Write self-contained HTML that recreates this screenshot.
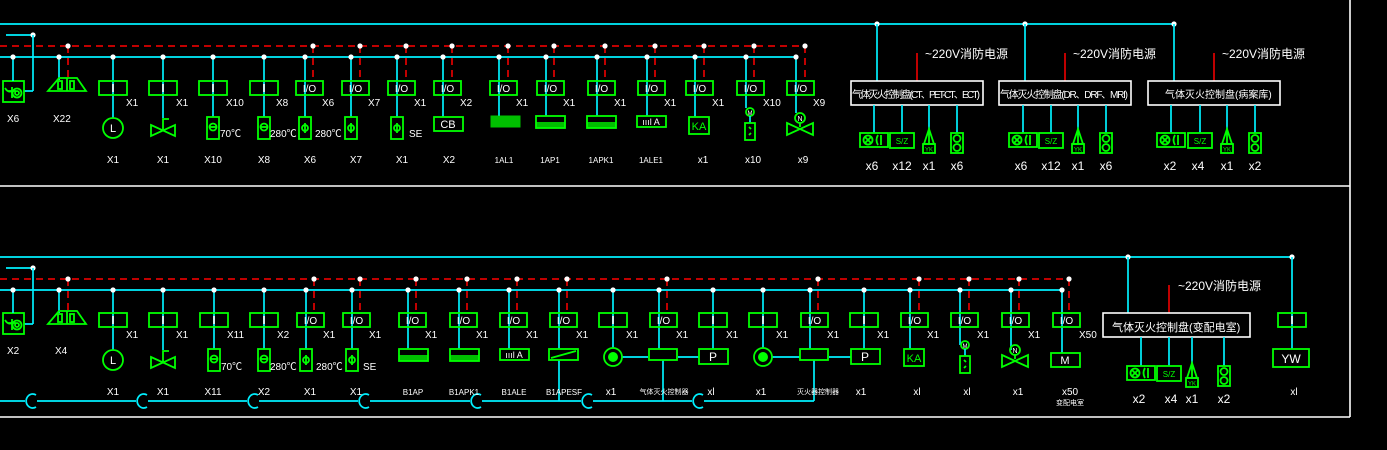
<!DOCTYPE html>
<html><head><meta charset="utf-8"><style>
html,body{margin:0;padding:0;background:#000;width:1387px;height:450px;overflow:hidden}
svg{display:block}
text{font-family:"Liberation Sans","Noto Sans CJK SC",sans-serif;fill:#fff;font-size:10px}
.g{fill:none;stroke:#00ff00;stroke-width:1.8}
.c{stroke:#00f0ff;stroke-width:1.7;fill:none}
.r{stroke:#f00;stroke-width:1.5;fill:none}
.rd{stroke:#f00;stroke-width:1.5;stroke-dasharray:7 5;fill:none}
.w{stroke:#fff;stroke-width:1.6;fill:none}
.bt{font-size:10px;text-anchor:middle}
.ct{text-anchor:middle}
</style></head><body>
<svg width="1387" height="450" viewBox="0 0 1387 450" xmlns="http://www.w3.org/2000/svg">
<defs>
<g id="dot"><circle r="2.6" fill="#fff"/></g>
<g id="bi"><rect x="-14" y="0" width="28" height="14" class="g"/><rect x="-0.8" y="3" width="1.6" height="8" fill="#fff"/></g>
<g id="bio"><rect x="-9" y="0" width="27" height="14" class="g"/><text x="4.5" y="11" class="ct" style="font-size:10px">I/O</text></g>
<g id="lamp"><circle cx="0" cy="10" r="10" class="g"/><text x="0" y="14" class="ct" style="font-size:11px">L</text></g>
<g id="valve"><path d="M-12 3 L12 14 L12 3 L-12 14 Z M0 9 V-3 H6" class="g"/></g>
<g id="th"><rect x="-6" y="0" width="12" height="22" class="g"/><circle cx="0" cy="10" r="3.5" class="g"/><line x1="-4" y1="10" x2="4" y2="10" class="g"/></g>
<g id="ph"><rect x="-6" y="0" width="12" height="22" class="g"/><circle cx="0" cy="11" r="3" class="g"/><line x1="0" y1="6" x2="0" y2="16" class="g"/></g>
<g id="hat1"><rect x="-14" y="0" width="29" height="11" fill="#00ff00" opacity=".75" stroke="#00ff00"/></g>
<g id="hat2"><rect x="-14" y="0" width="29" height="12" class="g"/><rect x="-14" y="6" width="29" height="6" fill="#00ff00" opacity=".75"/></g>
<g id="ale"><rect x="-14" y="0" width="29" height="11" class="g"/><text x="0" y="9" class="ct" style="font-size:9px">ıııl A</text></g>
<g id="ka"><rect x="-10" y="0" width="20" height="17" class="g"/><text x="0" y="13" class="ct" style="font-size:11px;fill:#00ff00">KA</text></g>
<g id="mot"><circle cx="0" cy="0" r="4" class="g"/><text x="0" y="3" class="ct" style="font-size:6px">M</text><line x1="0" y1="4" x2="0" y2="11" class="c"/><rect x="-5" y="11" width="10" height="17" class="g"/><path d="M-1 15 L1 17 M-1 23 L1 21" class="g"/></g>
<g id="vn"><circle cx="0" cy="0" r="5" class="g"/><text x="0" y="3" class="ct" style="font-size:7px">N</text><path d="M0 5 V9 M-13 5 L13 17 L13 5 L-13 17 Z" class="g"/></g>
<g id="hs"><rect x="-14" y="0" width="28" height="14" class="g"/><circle cx="-6" cy="7" r="4.5" class="g"/><path d="M-9 4 L-3 10 M-3 4 L-9 10 M4 2 Q1 7 4 12 M7 2 V12" class="g"/></g>
<g id="sz"><rect x="-12" y="0" width="24" height="15" class="g"/><text x="0" y="11" class="ct" style="font-size:8px;fill:#00ff00">S/Z</text></g>
<g id="yk"><path d="M0 -5 L-5 10 L5 10 Z M0 -5 V10" class="g"/><rect x="-6" y="10" width="12" height="9" class="g"/><text x="0" y="17.5" class="ct" style="font-size:6px;fill:#00ff00">YK</text></g>
<g id="oo"><rect x="-6" y="0" width="12" height="20" class="g"/><circle cx="0" cy="5.5" r="3.5" class="g"/><circle cx="0" cy="14.5" r="3.5" class="g"/></g>
<g id="icon1"><rect x="0" y="0" width="21" height="21" class="g"/><path d="M2 7 Q5 12 9 10 M9 6 V17 M5 10 H13" class="g"/><circle cx="14" cy="12" r="4.5" class="g"/><circle cx="14" cy="12" r="2" class="g"/></g>
<g id="tri"><path d="M-8 11 L3 -2 L21 -2 L30 11 Z M11 -2 V11" class="g"/><rect x="2" y="1" width="4" height="8" class="g"/><rect x="14" y="1" width="4" height="8" class="g"/></g>
<g id="cc"><path d="M4 -6 A6.5 7 0 1 0 4 6" class="c"/></g>
</defs>

<line x1="1350" y1="0" x2="1350" y2="417" class="w"/>
<line x1="0" y1="186" x2="1350" y2="186" class="w"/>
<line x1="0" y1="417" x2="1350" y2="417" class="w"/>

<line x1="0" y1="24" x2="1175" y2="24" class="c"/>
<line x1="6" y1="35" x2="33" y2="35" class="c"/><use href="#dot" x="33" y="35"/>
<line x1="33" y1="35" x2="33" y2="91" class="c"/><line x1="24" y1="91" x2="33" y2="91" class="c"/>
<line x1="0" y1="46" x2="806" y2="46" class="rd"/>
<line x1="0" y1="57" x2="796" y2="57" class="c"/>
<g>
<use href="#icon1" x="3" y="81"/><line x1="13" y1="57" x2="13" y2="81" class="c"/><use href="#dot" x="13" y="57"/>
<line x1="59" y1="57" x2="59" y2="80" class="c"/><use href="#dot" x="59" y="57"/><line x1="68" y1="46" x2="68" y2="78" class="rd"/><use href="#dot" x="68" y="46"/>
<use href="#tri" x="56" y="80"/>
<text x="7" y="122">X6</text><text x="53" y="122">X22</text>
</g>
<g class="c">
<line x1="113" y1="57" x2="113" y2="118"/><line x1="163" y1="57" x2="163" y2="118"/><line x1="213" y1="57" x2="213" y2="117"/><line x1="264" y1="57" x2="264" y2="117"/>
<line x1="305" y1="57" x2="305" y2="117"/><line x1="351" y1="57" x2="351" y2="117"/><line x1="397" y1="57" x2="397" y2="117"/><line x1="443" y1="57" x2="443" y2="117"/>
<line x1="499" y1="57" x2="499" y2="116"/><line x1="546" y1="57" x2="546" y2="116"/><line x1="597" y1="57" x2="597" y2="116"/><line x1="647" y1="57" x2="647" y2="116"/>
<line x1="695" y1="57" x2="695" y2="117"/><line x1="746" y1="57" x2="746" y2="108"/><line x1="796" y1="57" x2="796" y2="113"/>
</g>
<g class="rd">
<line x1="313" y1="46" x2="313" y2="81"/><line x1="360" y1="46" x2="360" y2="81"/><line x1="406" y1="46" x2="406" y2="81"/><line x1="452" y1="46" x2="452" y2="81"/>
<line x1="508" y1="46" x2="508" y2="81"/><line x1="554" y1="46" x2="554" y2="81"/><line x1="605" y1="46" x2="605" y2="81"/><line x1="655" y1="46" x2="655" y2="81"/>
<line x1="704" y1="46" x2="704" y2="81"/><line x1="754" y1="46" x2="754" y2="81"/><line x1="805" y1="46" x2="805" y2="81"/>
</g>
<g>
<use href="#dot" x="113" y="57"/><use href="#dot" x="163" y="57"/><use href="#dot" x="213" y="57"/><use href="#dot" x="264" y="57"/><use href="#dot" x="305" y="57"/><use href="#dot" x="351" y="57"/><use href="#dot" x="397" y="57"/><use href="#dot" x="443" y="57"/><use href="#dot" x="499" y="57"/><use href="#dot" x="546" y="57"/><use href="#dot" x="597" y="57"/><use href="#dot" x="647" y="57"/><use href="#dot" x="695" y="57"/><use href="#dot" x="746" y="57"/><use href="#dot" x="796" y="57"/>
<use href="#dot" x="313" y="46"/><use href="#dot" x="360" y="46"/><use href="#dot" x="406" y="46"/><use href="#dot" x="452" y="46"/><use href="#dot" x="508" y="46"/><use href="#dot" x="554" y="46"/><use href="#dot" x="605" y="46"/><use href="#dot" x="655" y="46"/><use href="#dot" x="704" y="46"/><use href="#dot" x="754" y="46"/><use href="#dot" x="805" y="46"/>
</g>
<g>
<use href="#bi" x="113" y="81"/><use href="#bi" x="163" y="81"/><use href="#bi" x="213" y="81"/><use href="#bi" x="264" y="81"/>
<use href="#bio" x="305" y="81"/><use href="#bio" x="351" y="81"/><use href="#bio" x="397" y="81"/><use href="#bio" x="443" y="81"/>
<use href="#bio" x="499" y="81"/><use href="#bio" x="546" y="81"/><use href="#bio" x="597" y="81"/><use href="#bio" x="647" y="81"/>
<use href="#bio" x="695" y="81"/><use href="#bio" x="746" y="81"/><use href="#bio" x="796" y="81"/>
<use href="#lamp" x="113" y="118"/><use href="#valve" x="163" y="122"/>
<use href="#th" x="213" y="117"/><text x="220" y="137">70℃</text>
<use href="#th" x="264" y="117"/><text x="270" y="137">280℃</text>
<use href="#ph" x="305" y="117"/><text x="315" y="137">280℃</text>
<use href="#ph" x="351" y="117"/>
<use href="#ph" x="397" y="117"/><text x="409" y="137">SE</text>
<rect x="434" y="117" width="29" height="14" class="g"/><text x="448" y="128" class="ct" style="font-size:11px">CB</text>
<use href="#hat1" x="505" y="116"/><use href="#hat2" x="550" y="116"/><use href="#hat2" x="601" y="116"/><use href="#ale" x="651" y="116"/>
<use href="#ka" x="699" y="117"/><use href="#mot" x="750" y="112"/><use href="#vn" x="800" y="118"/>
</g>
<g>
<text x="126" y="106">X1</text><text x="176" y="106">X1</text><text x="226" y="106">X10</text><text x="276" y="106">X8</text><text x="322" y="106">X6</text><text x="368" y="106">X7</text><text x="414" y="106">X1</text><text x="460" y="106">X2</text>
<text x="516" y="106">X1</text><text x="563" y="106">X1</text><text x="614" y="106">X1</text><text x="664" y="106">X1</text><text x="712" y="106">X1</text><text x="763" y="106">X10</text><text x="813" y="106">X9</text>
</g>
<g>
<text x="113" y="163" class="bt">X1</text><text x="163" y="163" class="bt">X1</text><text x="213" y="163" class="bt">X10</text><text x="264" y="163" class="bt">X8</text><text x="310" y="163" class="bt">X6</text><text x="356" y="163" class="bt">X7</text><text x="402" y="163" class="bt">X1</text><text x="449" y="163" class="bt">X2</text>
<text x="504" y="163" class="bt" style="font-size:8px">1AL1</text><text x="550" y="163" class="bt" style="font-size:8px">1AP1</text><text x="601" y="163" class="bt" style="font-size:8px">1APK1</text><text x="651" y="163" class="bt" style="font-size:8px">1ALE1</text>
<text x="703" y="163" class="bt">x1</text><text x="753" y="163" class="bt">x10</text><text x="803" y="163" class="bt">x9</text>
</g>

<g>
<use href="#dot" x="877" y="24"/><use href="#dot" x="1025" y="24"/><use href="#dot" x="1174" y="24"/>
<line x1="877" y1="24" x2="877" y2="81" class="c"/><line x1="1025" y1="24" x2="1025" y2="81" class="c"/><line x1="1174" y1="24" x2="1174" y2="81" class="c"/>
<line x1="917" y1="53" x2="917" y2="81" class="r"/><line x1="1065" y1="53" x2="1065" y2="81" class="r"/><line x1="1214" y1="53" x2="1214" y2="81" class="r"/>
<text x="925" y="58" style="font-size:12px">~220V消防电源</text><text x="1073" y="58" style="font-size:12px">~220V消防电源</text><text x="1222" y="58" style="font-size:12px">~220V消防电源</text>
<rect x="851" y="81" width="132" height="24" class="w"/><rect x="999" y="81" width="132" height="24" class="w"/><rect x="1148" y="81" width="132" height="24" class="w"/>
<text x="852" y="98" style="font-size:10px" textLength="128">气体灭火控制盘(CT、PET-CT、ECT)</text>
<text x="1000" y="98" style="font-size:10px" textLength="128">气体灭火控制盘(DR、DRF、MRI)</text>
<text x="1165" y="98" style="font-size:10px">气体灭火控制盘(病案库)</text>
<g class="c">
<line x1="874" y1="105" x2="874" y2="133"/><line x1="902" y1="105" x2="902" y2="133"/><line x1="929" y1="105" x2="929" y2="131"/><line x1="957" y1="105" x2="957" y2="133"/>
<line x1="1023" y1="105" x2="1023" y2="133"/><line x1="1051" y1="105" x2="1051" y2="133"/><line x1="1078" y1="105" x2="1078" y2="131"/><line x1="1106" y1="105" x2="1106" y2="133"/>
<line x1="1171" y1="105" x2="1171" y2="133"/><line x1="1200" y1="105" x2="1200" y2="133"/><line x1="1227" y1="105" x2="1227" y2="131"/><line x1="1255" y1="105" x2="1255" y2="133"/>
</g>
<use href="#hs" x="874" y="133"/><use href="#sz" x="902" y="133"/><use href="#yk" x="929" y="134"/><use href="#oo" x="957" y="133"/>
<use href="#hs" x="1023" y="133"/><use href="#sz" x="1051" y="133"/><use href="#yk" x="1078" y="134"/><use href="#oo" x="1106" y="133"/>
<use href="#hs" x="1171" y="133"/><use href="#sz" x="1200" y="133"/><use href="#yk" x="1227" y="134"/><use href="#oo" x="1255" y="133"/>
<text x="872" y="170" class="ct" style="font-size:12px">x6</text><text x="902" y="170" class="ct" style="font-size:12px">x12</text><text x="929" y="170" class="ct" style="font-size:12px">x1</text><text x="957" y="170" class="ct" style="font-size:12px">x6</text>
<text x="1021" y="170" class="ct" style="font-size:12px">x6</text><text x="1051" y="170" class="ct" style="font-size:12px">x12</text><text x="1078" y="170" class="ct" style="font-size:12px">x1</text><text x="1106" y="170" class="ct" style="font-size:12px">x6</text>
<text x="1170" y="170" class="ct" style="font-size:12px">x2</text><text x="1198" y="170" class="ct" style="font-size:12px">x4</text><text x="1227" y="170" class="ct" style="font-size:12px">x1</text><text x="1255" y="170" class="ct" style="font-size:12px">x2</text>
</g>

<line x1="0" y1="257" x2="1292" y2="257" class="c"/>
<line x1="6" y1="268" x2="33" y2="268" class="c"/><use href="#dot" x="33" y="268"/>
<line x1="33" y1="268" x2="33" y2="324" class="c"/><line x1="24" y1="324" x2="33" y2="324" class="c"/>
<line x1="0" y1="279" x2="1069" y2="279" class="rd"/>
<line x1="0" y1="290" x2="1062" y2="290" class="c"/>
<use href="#icon1" x="3" y="313"/><line x1="13" y1="290" x2="13" y2="313" class="c"/><use href="#dot" x="13" y="290"/>
<line x1="59" y1="290" x2="59" y2="313" class="c"/><use href="#dot" x="59" y="290"/><line x1="68" y1="279" x2="68" y2="311" class="rd"/><use href="#dot" x="68" y="279"/>
<use href="#tri" x="56" y="313"/>
<text x="7" y="354">X2</text><text x="55" y="354">X4</text>
<g class="c">
<line x1="113" y1="290" x2="113" y2="350"/><line x1="163" y1="290" x2="163" y2="350"/><line x1="214" y1="290" x2="214" y2="349"/><line x1="264" y1="290" x2="264" y2="349"/>
<line x1="306" y1="290" x2="306" y2="349"/><line x1="352" y1="290" x2="352" y2="349"/><line x1="408" y1="290" x2="408" y2="349"/><line x1="459" y1="290" x2="459" y2="349"/>
<line x1="509" y1="290" x2="509" y2="349"/><line x1="559" y1="290" x2="559" y2="349"/><line x1="559" y1="360" x2="559" y2="401"/>
<line x1="613" y1="290" x2="613" y2="348"/><line x1="659" y1="290" x2="659" y2="349"/><line x1="713" y1="290" x2="713" y2="349"/>
<line x1="763" y1="290" x2="763" y2="348"/><line x1="810" y1="290" x2="810" y2="349"/><line x1="864" y1="290" x2="864" y2="349"/>
<line x1="910" y1="290" x2="910" y2="349"/><line x1="960" y1="290" x2="960" y2="345"/><line x1="1011" y1="290" x2="1011" y2="350"/><line x1="1062" y1="290" x2="1062" y2="353"/>
<line x1="622" y1="357" x2="648" y2="357"/><line x1="678" y1="357" x2="699" y2="357"/><line x1="663" y1="360" x2="663" y2="401"/>
<line x1="772" y1="357" x2="800" y2="357"/><line x1="829" y1="357" x2="851" y2="357"/><line x1="814" y1="360" x2="814" y2="401"/>
<line x1="0" y1="401" x2="25" y2="401"/><line x1="37" y1="401" x2="136" y2="401"/><line x1="148" y1="401" x2="247" y2="401"/><line x1="259" y1="401" x2="358" y2="401"/><line x1="370" y1="401" x2="470" y2="401"/><line x1="482" y1="401" x2="581" y2="401"/><line x1="593" y1="401" x2="692" y2="401"/><line x1="704" y1="401" x2="814" y2="401"/>
</g>
<use href="#cc" x="32" y="401"/><use href="#cc" x="143" y="401"/><use href="#cc" x="254" y="401"/><use href="#cc" x="365" y="401"/><use href="#cc" x="477" y="401"/><use href="#cc" x="588" y="401"/><use href="#cc" x="699" y="401"/>
<g class="rd">
<line x1="314" y1="279" x2="314" y2="313"/><line x1="360" y1="279" x2="360" y2="313"/><line x1="416" y1="279" x2="416" y2="313"/><line x1="467" y1="279" x2="467" y2="313"/>
<line x1="517" y1="279" x2="517" y2="313"/><line x1="567" y1="279" x2="567" y2="313"/><line x1="667" y1="279" x2="667" y2="313"/><line x1="818" y1="279" x2="818" y2="313"/>
<line x1="919" y1="279" x2="919" y2="313"/><line x1="969" y1="279" x2="969" y2="313"/><line x1="1019" y1="279" x2="1019" y2="313"/><line x1="1069" y1="279" x2="1069" y2="313"/>
</g>
<g>
<use href="#dot" x="113" y="290"/><use href="#dot" x="163" y="290"/><use href="#dot" x="214" y="290"/><use href="#dot" x="264" y="290"/><use href="#dot" x="306" y="290"/><use href="#dot" x="352" y="290"/><use href="#dot" x="408" y="290"/><use href="#dot" x="459" y="290"/><use href="#dot" x="509" y="290"/><use href="#dot" x="559" y="290"/><use href="#dot" x="613" y="290"/><use href="#dot" x="659" y="290"/><use href="#dot" x="713" y="290"/><use href="#dot" x="763" y="290"/><use href="#dot" x="810" y="290"/><use href="#dot" x="864" y="290"/><use href="#dot" x="910" y="290"/><use href="#dot" x="960" y="290"/><use href="#dot" x="1011" y="290"/><use href="#dot" x="1062" y="290"/>
<use href="#dot" x="314" y="279"/><use href="#dot" x="360" y="279"/><use href="#dot" x="416" y="279"/><use href="#dot" x="467" y="279"/><use href="#dot" x="517" y="279"/><use href="#dot" x="567" y="279"/><use href="#dot" x="667" y="279"/><use href="#dot" x="818" y="279"/><use href="#dot" x="919" y="279"/><use href="#dot" x="969" y="279"/><use href="#dot" x="1019" y="279"/><use href="#dot" x="1069" y="279"/>
</g>
<g>
<use href="#bi" x="113" y="313"/><use href="#bi" x="163" y="313"/><use href="#bi" x="214" y="313"/><use href="#bi" x="264" y="313"/>
<use href="#bio" x="306" y="313"/><use href="#bio" x="352" y="313"/><use href="#bio" x="408" y="313"/><use href="#bio" x="459" y="313"/><use href="#bio" x="509" y="313"/><use href="#bio" x="559" y="313"/>
<use href="#bi" x="613" y="313"/><use href="#bio" x="659" y="313"/><use href="#bi" x="713" y="313"/><use href="#bi" x="763" y="313"/><use href="#bio" x="810" y="313"/><use href="#bi" x="864" y="313"/>
<use href="#bio" x="910" y="313"/><use href="#bio" x="960" y="313"/><use href="#bio" x="1011" y="313"/><use href="#bio" x="1062" y="313"/>
<use href="#lamp" x="113" y="350"/><use href="#valve" x="163" y="354"/>
<use href="#th" x="214" y="349"/><text x="221" y="370">70℃</text>
<use href="#th" x="264" y="349"/><text x="270" y="370">280℃</text>
<use href="#ph" x="306" y="349"/><text x="316" y="370">280℃</text>
<use href="#ph" x="352" y="349"/><text x="363" y="370">SE</text>
<use href="#hat2" x="413" y="349"/><use href="#hat2" x="464" y="349"/><use href="#ale" x="514" y="349"/>
<rect x="549" y="349" width="29" height="11" class="g"/><line x1="551" y1="358" x2="576" y2="351" class="g"/>
<circle cx="613" cy="357" r="9" class="g"/><circle cx="613" cy="357" r="5" fill="#00ff00"/>
<rect x="649" y="349" width="28" height="11" class="g"/>
<rect x="699" y="349" width="29" height="15" class="g"/><text x="713" y="361" class="ct" style="font-size:12px">P</text>
<circle cx="763" cy="357" r="9" class="g"/><circle cx="763" cy="357" r="5" fill="#00ff00"/>
<rect x="800" y="349" width="28" height="11" class="g"/>
<rect x="851" y="349" width="29" height="15" class="g"/><text x="865" y="361" class="ct" style="font-size:12px">P</text>
<use href="#ka" x="914" y="349"/><use href="#mot" x="965" y="345"/><use href="#vn" x="1015" y="350"/>
<rect x="1051" y="353" width="29" height="14" class="g"/><text x="1065" y="364" class="ct" style="font-size:11px">M</text>
</g>
<g>
<text x="126" y="338">X1</text><text x="176" y="338">X1</text><text x="227" y="338">X11</text><text x="277" y="338">X2</text><text x="323" y="338">X1</text><text x="369" y="338">X1</text><text x="425" y="338">X1</text><text x="476" y="338">X1</text><text x="526" y="338">X1</text><text x="576" y="338">X1</text>
<text x="626" y="338">X1</text><text x="676" y="338">X1</text><text x="726" y="338">X1</text><text x="776" y="338">X1</text><text x="827" y="338">X1</text><text x="877" y="338">X1</text><text x="927" y="338">X1</text><text x="977" y="338">X1</text><text x="1028" y="338">X1</text><text x="1079" y="338">X50</text>
</g>
<g>
<text x="113" y="395" class="bt">X1</text><text x="163" y="395" class="bt">X1</text><text x="213" y="395" class="bt">X11</text><text x="264" y="395" class="bt">X2</text><text x="310" y="395" class="bt">X1</text><text x="356" y="395" class="bt">X1</text>
<text x="413" y="395" class="bt" style="font-size:8px">B1AP</text><text x="464" y="395" class="bt" style="font-size:8px">B1APK1</text><text x="514" y="395" class="bt" style="font-size:8px">B1ALE</text><text x="564" y="395" class="bt" style="font-size:8px">B1APESF</text>
<text x="611" y="395" class="bt">x1</text><text x="664" y="394" class="bt" style="font-size:7px">气体灭火控制器</text><text x="711" y="395" class="bt">xl</text><text x="761" y="395" class="bt">x1</text><text x="818" y="394" class="bt" style="font-size:7px">灭火器控制器</text><text x="861" y="395" class="bt">x1</text>
<text x="917" y="395" class="bt">xl</text><text x="967" y="395" class="bt">xl</text><text x="1018" y="395" class="bt">x1</text><text x="1070" y="395" class="bt">x50</text><text x="1070" y="405" class="bt" style="font-size:7px">变配电室</text>
</g>
<use href="#dot" x="1128" y="257"/><use href="#dot" x="1292" y="257"/>
<line x1="1128" y1="257" x2="1128" y2="313" class="c"/><line x1="1292" y1="257" x2="1292" y2="349" class="c"/>
<line x1="1169" y1="285" x2="1169" y2="313" class="r"/>
<text x="1178" y="290" style="font-size:12px">~220V消防电源</text>
<rect x="1103" y="313" width="147" height="24" class="w"/>
<text x="1112" y="331" style="font-size:11px">气体灭火控制盘(变配电室)</text>
<g class="c"><line x1="1141" y1="337" x2="1141" y2="366"/><line x1="1169" y1="337" x2="1169" y2="366"/><line x1="1192" y1="337" x2="1192" y2="364"/><line x1="1224" y1="337" x2="1224" y2="366"/></g>
<use href="#hs" x="1141" y="366"/><use href="#sz" x="1169" y="366"/><use href="#yk" x="1192" y="368"/><use href="#oo" x="1224" y="366"/>
<text x="1139" y="403" class="ct" style="font-size:12px">x2</text><text x="1171" y="403" class="ct" style="font-size:12px">x4</text><text x="1192" y="403" class="ct" style="font-size:12px">x1</text><text x="1224" y="403" class="ct" style="font-size:12px">x2</text>
<use href="#bi" x="1292" y="313"/>
<rect x="1273" y="349" width="36" height="18" class="g"/><text x="1291" y="363" class="ct" style="font-size:12px">YW</text>
<text x="1294" y="395" class="bt">xl</text>
</svg>
</body></html>
